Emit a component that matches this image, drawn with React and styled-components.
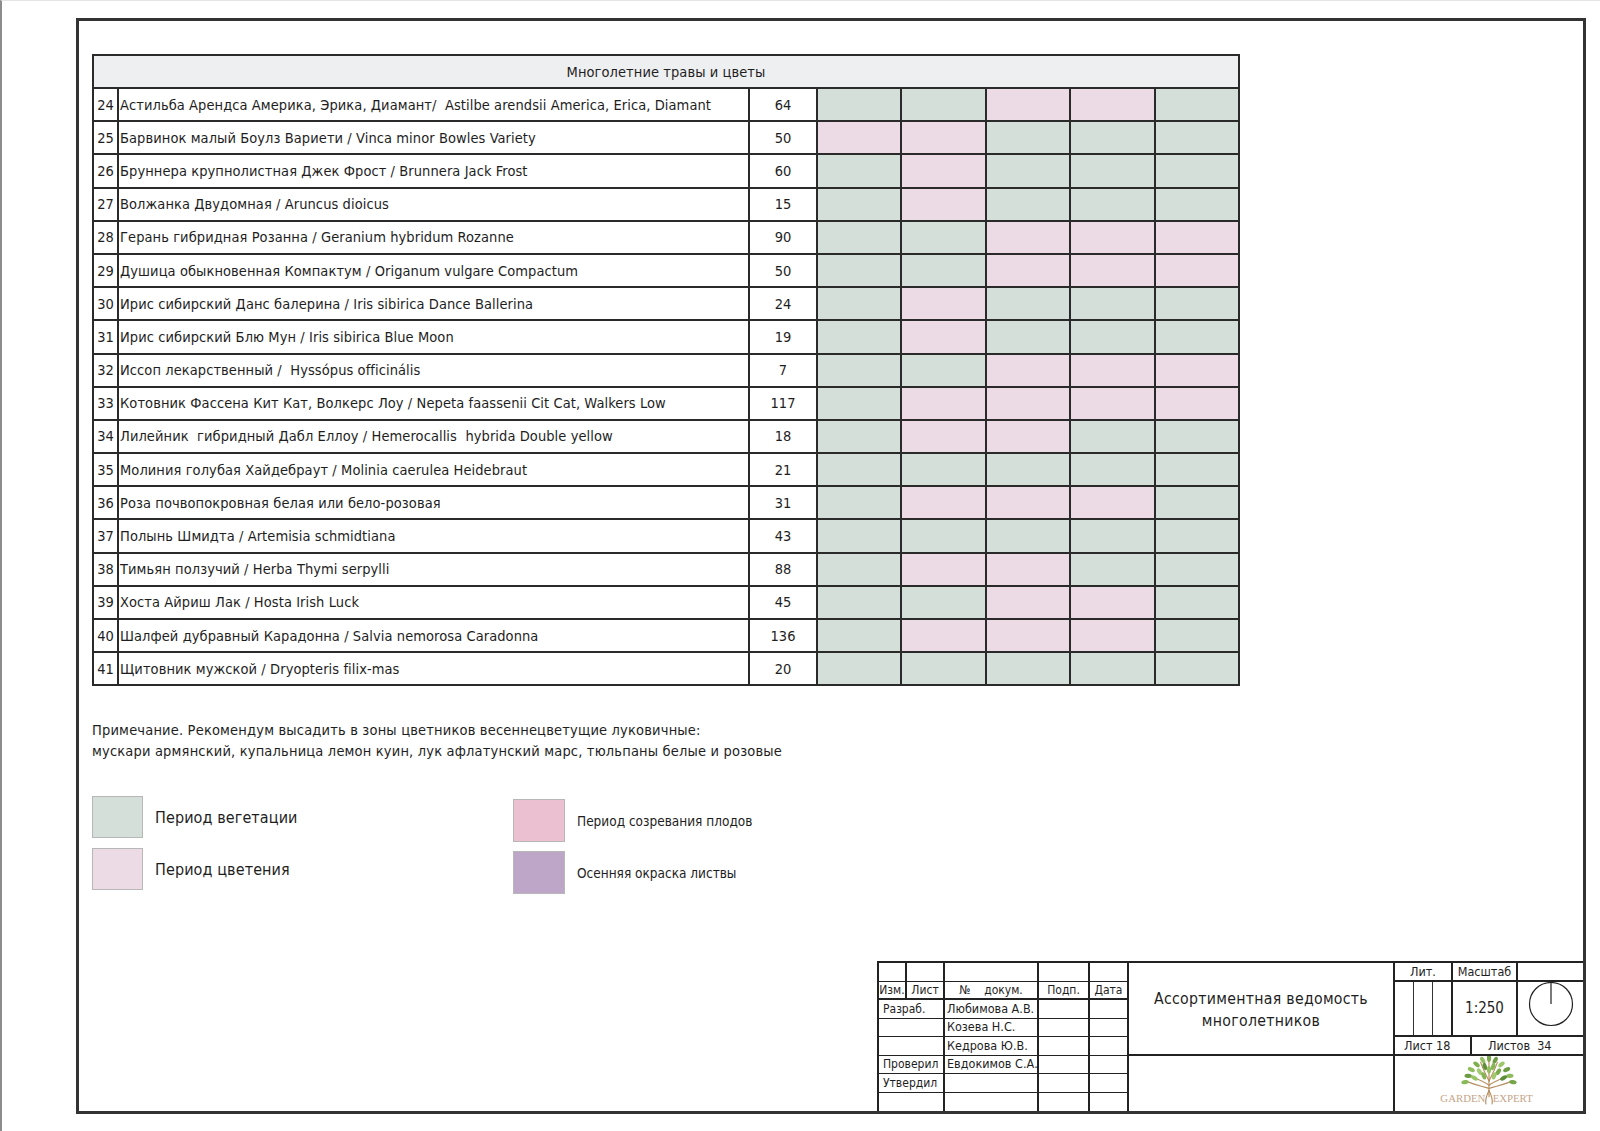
import React from 'react'
import styled, { createGlobalStyle } from 'styled-components'

const GlobalStyle = createGlobalStyle`
  html, body {
    margin: 0;
    padding: 0;
    background: #fff;
  }
  body {
    font-family: "DejaVu Sans Condensed", "DejaVu Sans", sans-serif;
    color: #1e1e1e;
  }
`

// G - период вегетации, P - период цветения
const plants = [
  [24, 'Астильба Арендса Америка, Эрика, Диамант/  Astilbe arendsii America, Erica, Diamant', 64, 'GGPPG'],
  [25, 'Барвинок малый Боулз Вариети / Vinca minor Bowles Variety', 50, 'PPGGG'],
  [26, 'Бруннера крупнолистная Джек Фрост / Brunnera Jack Frost', 60, 'GPGGG'],
  [27, 'Волжанка Двудомная / Aruncus dioicus', 15, 'GPGGG'],
  [28, 'Герань гибридная Розанна / Geranium hybridum Rozanne', 90, 'GGPPP'],
  [29, 'Душица обыкновенная Компактум / Origanum vulgare Compactum', 50, 'GGPPP'],
  [30, 'Ирис сибирский Данс балерина / Iris sibirica Dance Ballerina', 24, 'GPGGG'],
  [31, 'Ирис сибирский Блю Мун / Iris sibirica Blue Moon', 19, 'GPGGG'],
  [32, 'Иссоп лекарственный /  Hyssópus officinális', 7, 'GGPPP'],
  [33, 'Котовник Фассена Кит Кат, Волкерс Лоу / Nepeta faassenii Cit Cat, Walkers Low', 117, 'GPPPP'],
  [34, 'Лилейник  гибридный Дабл Еллоу / Hemerocallis  hybrida Double yellow', 18, 'GPPGG'],
  [35, 'Молиния голубая Хайдебраут / Molinia caerulea Heidebraut', 21, 'GGGGG'],
  [36, 'Роза почвопокровная белая или бело-розовая', 31, 'GPPPG'],
  [37, 'Полынь Шмидта / Artemisia schmidtiana', 43, 'GGGGG'],
  [38, 'Тимьян ползучий / Herba Thymi serpylli', 88, 'GPPGG'],
  [39, 'Хоста Айриш Лак / Hosta Irish Luck', 45, 'GGPPG'],
  [40, 'Шалфей дубравный Карадонна / Salvia nemorosa Caradonna', 136, 'GPPPG'],
  [41, 'Щитовник мужской / Dryopteris filix-mas', 20, 'GGGGG'],
]

const tones = {
  G: '#d5dfd9',
  P: '#ecdbe5',
}

export default function App() {
  return (
    <>
      <GlobalStyle />
      <Page>
        <Sheet>
          <Table>
            <HeadCell>Многолетние травы и цветы</HeadCell>
            {plants.map(([num, name, qty, phases]) => (
              <React.Fragment key={num}>
                <NumCell>{num}</NumCell>
                <NameCell>{name}</NameCell>
                <NumCell>{qty}</NumCell>
                {phases.split('').map((p, i) => (
                  <PhaseCell key={i} $tone={tones[p]} />
                ))}
              </React.Fragment>
            ))}
          </Table>

          <Note>
            Примечание. Рекомендум высадить в зоны цветников весеннецветущие луковичные:
            <br />
            мускари армянский, купальница лемон куин, лук афлатунский марс, тюльпаны белые и розовые
          </Note>

          <Legend>
            <LegendColumn>
              <LegendItem>
                <Swatch $color="#d5dfd9" />
                <LegendLabel>Период вегетации</LegendLabel>
              </LegendItem>
              <LegendItem>
                <Swatch $color="#ecdbe5" />
                <LegendLabel>Период цветения</LegendLabel>
              </LegendItem>
            </LegendColumn>
            <LegendColumn $shift>
              <LegendItem>
                <Swatch $color="#ebc1d2" $big />
                <LegendLabel $small>Период созревания плодов</LegendLabel>
              </LegendItem>
              <LegendItem>
                <Swatch $color="#bea6c8" $big />
                <LegendLabel $small>Осенняя окраска листвы</LegendLabel>
              </LegendItem>
            </LegendColumn>
          </Legend>

          <TitleBlock>
            <SignGrid>
              <SignCell $b={1} />
              <SignCell $b={1} />
              <SignCell $b={1} />
              <SignCell $b={1} />
              <SignCell $b={1} />

              <SignCell $b={2}>Изм.</SignCell>
              <SignCell $b={2}>Лист</SignCell>
              <SignCell $b={2}>№&nbsp;&nbsp;&nbsp;&nbsp;докум.</SignCell>
              <SignCell $b={2}>Подп.</SignCell>
              <SignCell $b={2}>Дата</SignCell>

              <SignCell $b={1} $span={2} $role>Разраб.</SignCell>
              <SignCell $b={1} $name>Любимова А.В.</SignCell>
              <SignCell $b={1} />
              <SignCell $b={1} />

              <SignCell $b={1} $span={2} />
              <SignCell $b={1} $name>Козева Н.С.</SignCell>
              <SignCell $b={1} />
              <SignCell $b={1} />

              <SignCell $b={1} $span={2} />
              <SignCell $b={1} $name>Кедрова Ю.В.</SignCell>
              <SignCell $b={1} />
              <SignCell $b={1} />

              <SignCell $b={1} $span={2} $role>Проверил</SignCell>
              <SignCell $b={1} $name>Евдокимов С.А.</SignCell>
              <SignCell $b={1} />
              <SignCell $b={1} />

              <SignCell $b={1} $span={2} $role>Утвердил</SignCell>
              <SignCell $b={1} />
              <SignCell $b={1} />
              <SignCell $b={1} />

              <SignCell $span={2} />
              <SignCell />
              <SignCell />
              <SignCell />
            </SignGrid>

            <CaptionBox>
              <Caption>
                Ассортиментная ведомость
                <br />
                многолетников
              </Caption>
              <CaptionEmpty />
            </CaptionBox>

            <InfoGrid>
              <InfoCell $col="1" $row="1" $b={2}>Лит.</InfoCell>
              <InfoCell $col="2 / 4" $row="1" $b={2}>Масштаб</InfoCell>
              <InfoCell $col="4" $row="1" $b={2} $last />
              <InfoCell $col="1" $row="2 / 5" $b={2}>
                <LitSlots>
                  <LitSlot />
                  <LitSlot />
                  <LitSlot $last />
                </LitSlots>
              </InfoCell>
              <InfoCell $col="2 / 4" $row="2 / 5" $b={2} $big>1:250</InfoCell>
              <InfoCell $col="4" $row="2 / 5" $b={2} $last>
                <Dial viewBox="0 0 46 46" width="46" height="46">
                  <circle cx="23" cy="23" r="21.5" fill="none" stroke="#222" strokeWidth="1.2" />
                  <line x1="23" y1="1.5" x2="23" y2="23" stroke="#222" strokeWidth="1.2" />
                </Dial>
              </InfoCell>
              <InfoCell $col="1 / 3" $row="5" $b={2} $left="9px">Лист 18</InfoCell>
              <InfoCell $col="3 / 5" $row="5" $b={2} $left="16px" $last>Листов&nbsp; 34</InfoCell>
              <InfoCell $col="1 / 5" $row="6 / 9" $last>
                <Logo />
              </InfoCell>
            </InfoGrid>
          </TitleBlock>
        </Sheet>
      </Page>
    </>
  )
}

function Logo() {
  const leaves = [
    [50, 5, 0, '#7aa84c'], [44, 7, -30, '#94c063'], [56, 7, 30, '#6f9d45'],
    [38, 11, -50, '#7fb050'], [62, 11, 50, '#9bc66a'], [46, 13, -15, '#5f8f3a'],
    [54, 13, 15, '#86b657'], [33, 16, -65, '#8fbd5d'], [67, 16, 65, '#6c9b42'],
    [41, 18, -35, '#a2ca72'], [59, 18, 35, '#79aa4b'], [30, 22, -85, '#6d9c43'],
    [70, 22, 85, '#8ebc5c'], [36, 24, -60, '#9ac567'], [64, 24, 60, '#5e8e39'],
    [45, 22, -20, '#83b354'], [55, 22, 20, '#a0c96f'], [27, 28, -100, '#8bb95a'],
    [73, 28, 100, '#75a549'], [50, 16, 0, '#93bf61'],
  ]
  return (
    <LogoMark viewBox="0 0 100 50" width="104" height="52">
      <g fill="none" stroke="#b68d5e" strokeWidth="1.1" strokeLinecap="round">
        <path d="M50 42 L50 8" />
        <path d="M50 31 C45 27 39 25 33 23" />
        <path d="M50 31 C55 27 61 25 67 23" />
        <path d="M50 27 C47 21 44 15 42 9" />
        <path d="M50 27 C53 21 56 15 58 9" />
        <path d="M50 34 C42 32 34 30 28 27" />
        <path d="M50 34 C58 32 66 30 72 27" />
        <path d="M50 36 C48 40 46 44 47 49" />
        <path d="M50 36 C52 40 54 44 53 49" />
      </g>
      {leaves.map(([x, y, r, c], i) => (
        <ellipse key={i} cx={x} cy={y} rx="2" ry="3.6" fill={c} transform={`rotate(${r} ${x} ${y})`} />
      ))}
      <text x="46.5" y="47" textAnchor="end" fontFamily="Liberation Serif, serif" fontSize="10.4" fill="#c6a589">GARDEN</text>
      <text x="53.5" y="47" fontFamily="Liberation Serif, serif" fontSize="10.4" fill="#c6a589">EXPERT</text>
    </LogoMark>
  )
}

const Page = styled.div`
  width: 1600px;
  height: 1131px;
  box-sizing: border-box;
  padding: 17px 14px 17px 74px;
  border-left: 2px solid #8c8c8c;
  border-top: 1px solid #e4e4e4;
`

const Sheet = styled.div`
  width: 1510px;
  height: 1096px;
  box-sizing: border-box;
  border: 3px solid #333;
  padding: 33px 0 0 13px;
  display: flex;
  flex-direction: column;
`

const Table = styled.div`
  display: grid;
  grid-template-columns: 23px 629px 66px repeat(5, 1fr);
  grid-template-rows: 31px;
  grid-auto-rows: 31.2px;
  gap: 2px;
  padding: 2px;
  width: 1148px;
  box-sizing: border-box;
  background: #2a2a2a;
  font-size: 14.5px;
  letter-spacing: 0.08px;
`

const HeadCell = styled.div`
  grid-column: 1 / -1;
  background: #eeeff1;
  display: flex;
  align-items: center;
  justify-content: center;
`

const NumCell = styled.div`
  background: #fff;
  display: flex;
  align-items: center;
  justify-content: center;
  letter-spacing: 0;
`

const NameCell = styled.div`
  background: #fff;
  display: flex;
  align-items: center;
  padding-left: 1px;
  white-space: pre;
`

const PhaseCell = styled.div`
  background: ${(p) => p.$tone};
`

const Note = styled.div`
  margin-top: 34px;
  font-size: 14.5px;
  line-height: 21px;
  letter-spacing: 0.18px;
`

const Legend = styled.div`
  margin-top: 34px;
  display: grid;
  grid-template-columns: 421px auto;
  justify-content: start;
`

const LegendColumn = styled.div`
  display: flex;
  flex-direction: column;
  gap: ${(p) => (p.$shift ? '9px' : '10px')};
  padding-top: ${(p) => (p.$shift ? '3px' : '0')};
`

const LegendItem = styled.div`
  display: flex;
  align-items: center;
  gap: 12px;
`

const Swatch = styled.div`
  width: ${(p) => (p.$big ? '52px' : '51px')};
  height: ${(p) => (p.$big ? '43px' : '42px')};
  box-sizing: border-box;
  background: ${(p) => p.$color};
  border: 1px solid #b7b7b7;
`

const LegendLabel = styled.div`
  font-size: ${(p) => (p.$small ? '13.5px' : '16px')};
  letter-spacing: ${(p) => (p.$small ? '0' : '0.1px')};
`

const TitleBlock = styled.div`
  margin-top: auto;
  align-self: flex-end;
  display: flex;
  height: 150px;
  box-sizing: border-box;
  border-top: 2px solid #222;
  font-size: 12px;
`

const SignGrid = styled.div`
  display: grid;
  grid-template-columns: 28px 38px 94px 51px 39px;
  grid-template-rows: repeat(8, 1fr);
  border-left: 2px solid #222;
`

const SignCell = styled.div`
  grid-column: span ${(p) => p.$span || 1};
  box-sizing: border-box;
  border-right: 2px solid #222;
  border-bottom: ${(p) => (p.$b ? `${p.$b}px solid #222` : 'none')};
  display: flex;
  align-items: center;
  justify-content: ${(p) => (p.$name || p.$role ? 'flex-start' : 'center')};
  padding-left: ${(p) => (p.$name ? '2px' : p.$role ? '4px' : '0')};
  font-size: ${(p) => (p.$name ? '12.5px' : '12px')};
  white-space: nowrap;
  overflow: hidden;
  line-height: 1;
`

const CaptionBox = styled.div`
  width: 266px;
  box-sizing: border-box;
  border-right: 2px solid #222;
  display: grid;
  grid-template-rows: 5fr 3fr;
`

const Caption = styled.div`
  border-bottom: 2px solid #222;
  display: flex;
  align-items: center;
  justify-content: center;
  text-align: center;
  font-size: 15.7px;
  line-height: 22px;
  letter-spacing: 0.3px;
  padding-top: 4px;
`

const CaptionEmpty = styled.div``

const InfoGrid = styled.div`
  width: 188px;
  display: grid;
  grid-template-columns: 58px 19px 46px 65px;
  grid-template-rows: repeat(8, 1fr);
`

const InfoCell = styled.div`
  grid-column: ${(p) => p.$col};
  grid-row: ${(p) => p.$row};
  box-sizing: border-box;
  border-right: ${(p) => (p.$last ? 'none' : '2px solid #222')};
  border-bottom: ${(p) => (p.$b ? `${p.$b}px solid #222` : 'none')};
  display: flex;
  align-items: center;
  justify-content: ${(p) => (p.$left ? 'flex-start' : 'center')};
  padding-left: ${(p) => p.$left || '0'};
  font-size: ${(p) => (p.$big ? '15px' : '12.5px')};
  white-space: nowrap;
  overflow: hidden;
`

const LitSlots = styled.div`
  align-self: stretch;
  display: flex;
  width: 100%;
`

const LitSlot = styled.div`
  flex: 1;
  border-right: ${(p) => (p.$last ? 'none' : '1px solid #333')};
`

const Dial = styled.svg`
  display: block;
  margin-bottom: 8px;
`

const LogoMark = styled.svg`
  display: block;
  margin-top: -8px;
`
